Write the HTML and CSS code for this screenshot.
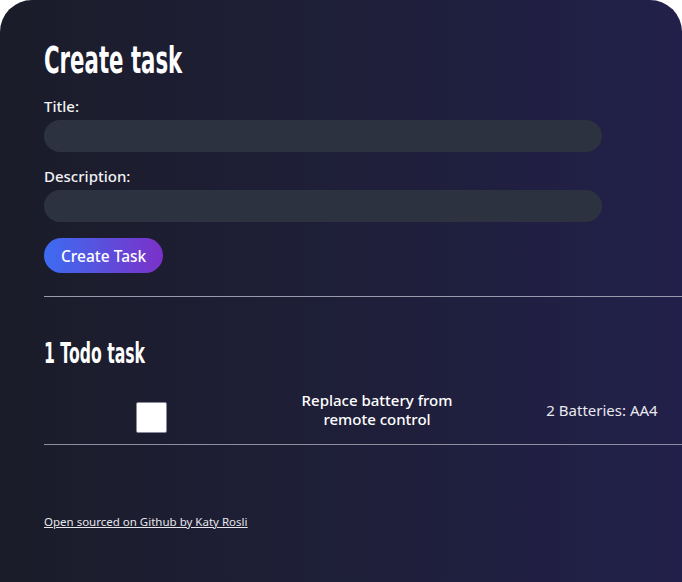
FILE: index.html
```html
<!DOCTYPE html>
<html lang="en">
<head>
<meta charset="utf-8">
<title>Create task</title>
<link rel="stylesheet" href="styles.css">
</head>
<body>
<div class="app">
  <section class="create">
    <h1 class="title"><span class="narrow">Create task</span></h1>
    <label class="label">Title:</label>
    <div class="input"></div>
    <label class="label label-desc">Description:</label>
    <div class="input"></div>
    <button class="btn">Create Task</button>
  </section>
  <hr class="rule">
  <h2 class="subtitle"><span class="narrow">1 Todo task</span></h2>
  <div class="row">
    <div class="cell"><span class="check"></span></div>
    <div class="cell"><span class="name">Replace battery from remote control</span></div>
    <div class="cell"><span class="desc">2 Batteries: AA4</span></div>
  </div>
  <hr class="rule rule-row">
  <footer class="footer"><a href="#">Open sourced on Github</a> by <a href="#">Katy Rosli</a></footer>
</div>
</body>
</html>
```
FILE: styles.css
```css
html, body {
  margin: 0;
  padding: 0;
  background: #ffffff;
  height: 100%;
  overflow: hidden;
}
.app {
  box-sizing: border-box;
  height: 582px;
  border-radius: 32px 32px 0 0;
  background: linear-gradient(90deg, #1b1c29 0%, #1f1f3c 60%, #22204a 100%);
  padding: 40px 0 0 44px;
  color: #f2f2f5;
  font-family: "Noto Sans", "Open Sans", sans-serif;
  overflow: hidden;
}
.title {
  margin: 0;
  font-family: "DejaVu Sans", "Noto Sans", sans-serif;
  font-weight: 700;
  font-size: 38px;
  line-height: 40px;
  color: #ffffff;
}
.narrow {
  display: inline-block;
  transform-origin: left center;
  transform: scaleX(0.56);
  white-space: nowrap;
}
.label {
  display: block;
  font-size: 15px;
  line-height: 20px;
  font-weight: 500;
  margin-top: 16px;
}
.label-desc { margin-top: 14px; }
.input {
  width: 558px;
  height: 32px;
  border-radius: 16px;
  background: #2d3241;
  margin-top: 4px;
}
.btn {
  display: block;
  margin-top: 16px;
  height: 35px;
  padding: 0 17px;
  border: none;
  border-radius: 18px;
  background: linear-gradient(90deg, #3c6cf1 0%, #7b31c8 100%);
  color: #ffffff;
  font-family: "Noto Sans", "Open Sans", sans-serif;
  font-size: 15.5px;
  font-weight: 500;
}
.rule {
  margin: 23px 0 0 0;
  border: none;
  border-top: 1px solid #9a9aae;
  width: 700px;
}
.subtitle {
  margin: 42px 0 0 0;
  font-family: "DejaVu Sans", "Noto Sans", sans-serif;
  font-weight: 700;
  font-size: 28px;
  line-height: 30px;
  color: #ffffff;
}
.row {
  display: grid;
  grid-template-columns: 214px 238px 212px;
  align-items: center;
  margin-top: 20px;
  height: 50px;
}
.cell {
  display: flex;
  justify-content: center;
  text-align: center;
}
.check {
  display: block;
  width: 29px;
  height: 29px;
  background: #ffffff;
  border: 1px solid #8a8a9a;
  border-radius: 2px;
  margin-top: 6px;
}
.name {
  display: block;
  max-width: 180px;
  font-size: 15px;
  line-height: 19px;
  font-weight: 500;
  color: #ffffff;
  margin-bottom: 8px;
}
.desc {
  display: block;
  font-size: 15px;
  line-height: 19px;
  color: #e8e8ee;
  margin-bottom: 8px;
}
.rule-row {
  margin-top: 5px;
  border-top: 1px solid #8e8ea0;
}
.footer {
  margin-top: 70px;
  font-size: 11.5px;
  line-height: 14px;
  color: #e6e6ec;
  text-decoration: underline;
}
.footer a { color: #e6e6ec; }
```
